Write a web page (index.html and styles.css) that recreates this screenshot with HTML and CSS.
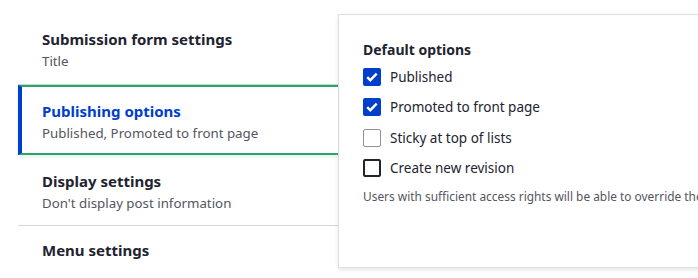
FILE: index.html
```html
<!DOCTYPE html>
<html lang="en">
<head>
  <meta charset="UTF-8">
  <title>Vertical tabs</title>
  <link rel="stylesheet" href="styles.css">
</head>
<body>
  <div class="vertical-tabs">
    <ul class="tabs-menu">
      <li class="tab-item">
        <div class="tab-title">Submission form settings</div>
        <div class="tab-summary">Title</div>
      </li>
      <li class="tab-item is-selected">
        <div class="tab-title">Publishing options</div>
        <div class="tab-summary">Published, Promoted to front page</div>
      </li>
      <li class="tab-item">
        <div class="tab-title">Display settings</div>
        <div class="tab-summary">Don't display post information</div>
      </li>
      <li class="tab-item">
        <div class="tab-title">Menu settings</div>
      </li>
    </ul>

    <div class="tabs-pane">
      <div class="fieldset-label">Default options</div>
      <label class="check-row">
        <span class="checkbox checked">
          <svg viewBox="0 0 18 18" width="18" height="18"><path d="M4.2 9.2l3.1 3 6.4-6.6" fill="none" stroke="#fff" stroke-width="2.4"/></svg>
        </span>
        Published
      </label>
      <label class="check-row">
        <span class="checkbox checked">
          <svg viewBox="0 0 18 18" width="18" height="18"><path d="M4.2 9.2l3.1 3 6.4-6.6" fill="none" stroke="#fff" stroke-width="2.4"/></svg>
        </span>
        Promoted to front page
      </label>
      <label class="check-row">
        <span class="checkbox light"></span>
        Sticky at top of lists
      </label>
      <label class="check-row">
        <span class="checkbox"></span>
        Create new revision
      </label>
      <p class="description">Users with sufficient access rights will be able to override these options.</p>
    </div>
  </div>
</body>
</html>
```

FILE: styles.css
```css
html, body {
  margin: 0;
  background: #fff;
  overflow: hidden;
}

body {
  font-family: 'Noto Sans', sans-serif;
  color: #222330;
}

.vertical-tabs {
  display: flex;
  align-items: flex-start;
  padding: 14px 0 0 18px;
  width: 1000px;
}

.tabs-menu {
  list-style: none;
  margin: 1px 0 0;
  padding: 0;
  width: 320px;
  flex: none;
}

.tab-item {
  padding: 12px 24px 13px;
  border-bottom: 1px solid #d4d4da;
}

.tab-item:last-child {
  border-bottom: none;
}

.tab-item.is-selected {
  position: relative;
  padding: 12px 20px 10px;
  background: #fff;
  border-top: 2px solid #26a769;
  border-bottom: 2px solid #26a769;
  border-left: 4px solid #003ecc;
  box-shadow: 0 2px 4px rgba(0, 0, 0, 0.08);
  z-index: 1;
}

.is-selected + .tab-item {
  padding-top: 14px;
  padding-bottom: 12px;
}

.tab-title {
  font-size: 15px;
  font-weight: 700;
  line-height: 24px;
}

.is-selected .tab-title {
  color: #003ecc;
}

.tab-summary {
  font-size: 13.3px;
  line-height: 20px;
  color: #545560;
}

.tabs-pane {
  flex: 1;
  height: 226px;
  padding: 26px 24px 0;
  border: 1px solid #dedfe4;
  box-shadow: 0 2px 4px rgba(0, 0, 0, 0.1);
  background: #fff;
}

.fieldset-label {
  font-size: 14px;
  font-weight: 700;
  line-height: 18px;
  margin-bottom: 3px;
}

.check-row {
  display: flex;
  align-items: center;
  gap: 9px;
  height: 30.3px;
  font-size: 13.5px;
}

.checkbox {
  width: 18px;
  height: 18px;
  box-sizing: border-box;
  border: 2px solid #222330;
  border-radius: 2px;
  flex: none;
}

.checkbox.checked {
  background: #003ecc;
  border-color: #003ecc;
}

.checkbox.checked svg {
  display: block;
  margin: -2px;
}

.checkbox.light {
  border: 1px solid #919297;
}

.description {
  margin: 4px 0 0;
  font-size: 11.9px;
  line-height: 18px;
  color: #545560;
  white-space: nowrap;
}
```
